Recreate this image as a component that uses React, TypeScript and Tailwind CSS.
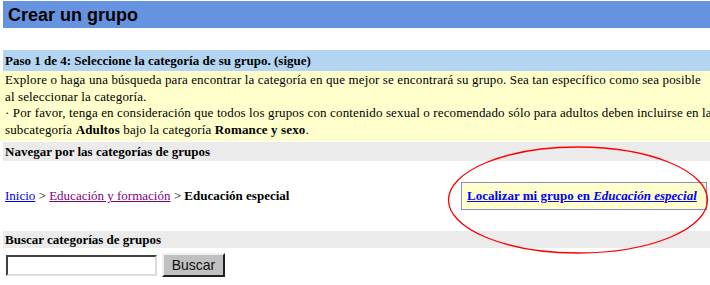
import React from 'react';

export default function App() {
  return (
    <div className="relative w-[710px] h-[285px] overflow-hidden bg-white font-['Liberation_Serif',serif] text-[13px] text-black">
      {/* page title */}
      <div className="ml-[3px] mt-[1px] h-[27px] w-[720px] bg-[#6593df] flex items-center pl-[5px]">
        <h1 className="font-['Liberation_Sans',Arial,sans-serif] font-bold text-[18px] leading-none">Crear un grupo</h1>
      </div>

      <div className="h-[22px]" />

      {/* step heading */}
      <div className="ml-[3px] w-[720px] h-[21px] bg-[#b4d5f2] flex items-center pl-[2px] font-bold">
        Paso 1 de 4: Seleccione la categoría de su grupo. (sigue)
      </div>

      <div className="w-[730px] bg-[#ffffcc] pl-[5px] pt-[1px] pb-[3px] leading-[16.5px] whitespace-nowrap tracking-[0.13px]">
        <div>Explore o haga una búsqueda para encontrar la categoría en que mejor se encontrará su grupo. Sea tan específico como sea posible</div>
        <div>al seleccionar la categoría.</div>
        <div>· Por favor, tenga en consideración que todos los grupos con contenido sexual o recomendado sólo para adultos deben incluirse en la</div>
        <div>
          subcategoría <b>Adultos</b> bajo la categoría <b>Romance y sexo</b>.
        </div>
      </div>

      <div className="ml-[3px] mt-[1px] w-[720px] h-[19px] bg-[#ebebeb] flex items-center pl-[2px] font-bold">
        Navegar por las categorías de grupos
      </div>

      {/* breadcrumb row */}
      <div className="h-[70px] flex items-center justify-between pl-[5px] pr-[3px]">
        <div className="whitespace-nowrap">
          <a href="#" className="text-[#0000ff] underline">Inicio</a>
          {' > '}
          <a href="#" className="text-[#800080] underline">Educación y formación</a>
          {' > '}
          <b>Educación especial</b>
        </div>
        <div className="h-[28px] w-[246px] border border-[#8c8cc8] bg-[#ffffcc] flex items-center pl-[5px] whitespace-nowrap">
          <a href="#" className="text-[#0000ff] underline font-bold">
            Localizar mi grupo en <i>Educación especial</i>
          </a>
        </div>
      </div>

      <div className="ml-[3px] w-[720px] h-[17px] bg-[#ebebeb] flex items-center pl-[2px] font-bold">
        Buscar categorías de grupos
      </div>

      {/* search */}
      <div className="flex items-center gap-[5px] pl-[6px] pt-[5px]">
        <input
          type="text"
          className="w-[151px] h-[21px] bg-white border-2 border-t-[#404040] border-l-[#404040] border-b-[#dcdcdc] border-r-[#dcdcdc] outline-none"
        />
        <button className="w-[63px] h-[24px] bg-[#c0c0c0] border-2 border-t-[#f0f0f0] border-l-[#f0f0f0] border-b-[#202020] border-r-[#202020] font-['Liberation_Sans',Arial,sans-serif] text-[14px] text-[#111] leading-none">
          Buscar
        </button>
      </div>

      {/* hand-drawn highlight */}
      <svg className="absolute left-[447px] top-[145px]" width="262" height="110" viewBox="0 0 262 110">
        <ellipse cx="131" cy="55" rx="129.5" ry="53" fill="none" stroke="#ff0000" strokeWidth="1.3" />
      </svg>
    </div>
  );
}
